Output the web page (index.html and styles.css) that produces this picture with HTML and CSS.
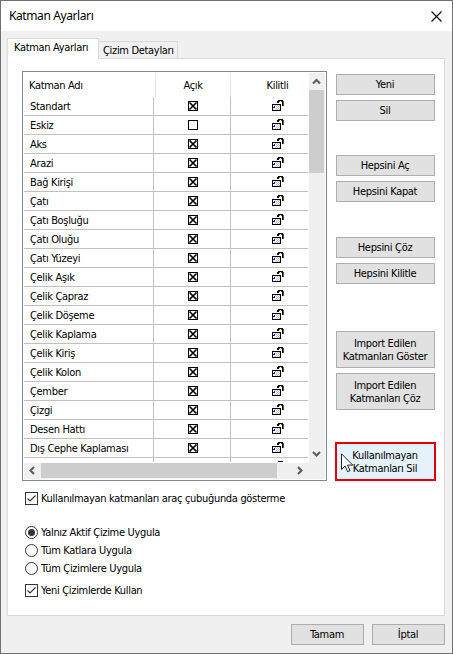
FILE: index.html
```html
<!DOCTYPE html>
<html lang="tr">
<head>
  <meta charset="UTF-8">
  <meta name="viewport" content="width=device-width, initial-scale=1.0">
  <title>Katman Ayarları</title>
  <link rel="stylesheet" href="styles.css">
</head>
<body>
  <div class="dialog">
    <header class="titlebar">
      <h1 class="title">Katman Ayarları</h1>
      <svg class="close" width="11" height="11" viewBox="0 0 11 11"><path d="M0.5 0.5L10.5 10.5M10.5 0.5L0.5 10.5" stroke="#000" stroke-width="1.1"/></svg>
    </header>

    <nav class="tabs">
      <div class="tab active">Katman Ayarları</div>
      <div class="tab">Çizim Detayları</div>
    </nav>

    <main class="pane">
      <section class="left">
        <div class="listbox">
          <div class="list-top">
            <div class="list">
              <div class="list-head">
                <div class="name">Katman Adı</div>
                <div class="open">Açık</div>
                <div class="locked">Kilitli</div>
              </div>
              <div id="rows"></div>
            </div>
            <div class="vscroll">
              <svg class="arrow" width="15" height="17" viewBox="0 0 15 17"><path d="M4 10.5L7.5 7L11 10.5" fill="none" stroke="#606060" stroke-width="2.2"/></svg>
              <div class="vthumb"></div>
              <svg class="arrow" width="15" height="17" viewBox="0 0 15 17"><path d="M4 6L7.5 9.5L11 6" fill="none" stroke="#606060" stroke-width="2.2"/></svg>
            </div>
          </div>
          <div class="hscroll">
            <svg class="arrow" width="17" height="15" viewBox="0 0 17 15"><path d="M10 4L6.5 7.5L10 11" fill="none" stroke="#606060" stroke-width="2.2"/></svg>
            <div class="hthumb"></div>
            <svg class="arrow right" width="17" height="15" viewBox="0 0 17 15"><path d="M6 4L9.5 7.5L6 11" fill="none" stroke="#606060" stroke-width="2.2"/></svg>
          </div>
        </div>

        <div class="option hide-unused">
          <svg width="13" height="13" viewBox="0 0 13 13"><rect x="0.5" y="0.5" width="12" height="12" fill="#fff" stroke="#333"/><path d="M2.5 6.5L5 9L10.5 3.5" fill="none" stroke="#333" stroke-width="1.2"/></svg>
          <span>Kullanılmayan katmanları araç çubuğunda gösterme</span>
        </div>
        <div class="option radio first">
          <svg width="13" height="13" viewBox="0 0 13 13"><circle cx="6.5" cy="6.5" r="6" fill="#fff" stroke="#333"/><circle cx="6.5" cy="6.5" r="3.5" fill="#333"/></svg>
          <span>Yalnız Aktif Çizime Uygula</span>
        </div>
        <div class="option radio">
          <svg width="13" height="13" viewBox="0 0 13 13"><circle cx="6.5" cy="6.5" r="6" fill="#fff" stroke="#333"/></svg>
          <span>Tüm Katlara Uygula</span>
        </div>
        <div class="option radio">
          <svg width="13" height="13" viewBox="0 0 13 13"><circle cx="6.5" cy="6.5" r="6" fill="#fff" stroke="#333"/></svg>
          <span>Tüm Çizimlere Uygula</span>
        </div>
        <div class="option new-drawings">
          <svg width="13" height="13" viewBox="0 0 13 13"><rect x="0.5" y="0.5" width="12" height="12" fill="#fff" stroke="#333"/><path d="M2.5 6.5L5 9L10.5 3.5" fill="none" stroke="#333" stroke-width="1.2"/></svg>
          <span>Yeni Çizimlerde Kullan</span>
        </div>
      </section>

      <section class="actions">
        <div class="group">
          <button class="button">Yeni</button>
          <button class="button">Sil</button>
        </div>
        <div class="group">
          <button class="button">Hepsini Aç</button>
          <button class="button">Hepsini Kapat</button>
        </div>
        <div class="group second">
          <button class="button">Hepsini Çöz</button>
          <button class="button">Hepsini Kilitle</button>
        </div>
        <div class="group imports">
          <button class="button tall">Import Edilen<br>Katmanları Göster</button>
          <button class="button tall">Import Edilen<br>Katmanları Çöz</button>
        </div>
        <button class="button tall hovered">
          Kullanılmayan<br>Katmanları Sil
          <svg class="cursor" width="13" height="20" viewBox="0 0 13 20"><path d="M0.5 0.8V16.5L4.1 13L6.6 18.7L9 17.6L6.5 12.1H11.8Z" fill="#fff" stroke="#223" stroke-width="1"/></svg>
        </button>
      </section>
    </main>

    <footer class="footer">
      <button class="button small">Tamam</button>
      <button class="button small">İptal</button>
    </footer>
  </div>

  <script src="script.js"></script>
</body>
</html>
```

FILE: styles.css
```css
* {
  box-sizing: border-box;
}

body {
  margin: 0;
  font-family: "DejaVu Sans Condensed", "Noto Sans", sans-serif;
  font-size: 11px;
  letter-spacing: -0.32px;
  color: #000;
}

svg {
  display: block;
  flex: none;
}

.dialog {
  width: 453px;
  height: 654px;
  border: 1px solid #707070;
  background-color: #f0f0f0;
  overflow: hidden;
}

.titlebar {
  height: 30px;
  padding: 0 10px 0 8px;
  background-color: #fff;
  display: flex;
  align-items: center;
  justify-content: space-between;
}

.title {
  margin: 0;
  font-family: "Noto Sans", sans-serif;
  font-size: 12px;
  font-weight: normal;
  letter-spacing: -0.4px;
  line-height: 16px;
}

.tabs {
  height: 27px;
  padding-left: 6px;
  display: flex;
  align-items: flex-end;
  white-space: nowrap;
}

.tab {
  width: 79px;
  height: 17px;
  border: 1px solid #d9d9d9;
  border-width: 1px 1px 0 0;
  padding-left: 4px;
  line-height: 18px;
}

.tab.active {
  position: relative;
  width: 92px;
  height: 21px;
  margin-bottom: -1px;
  border-left-width: 1px;
  padding-left: 6px;
  background-color: #fff;
}

.pane {
  width: 438px;
  height: 558px;
  margin-left: 6px;
  border: 1px solid #d9d9d9;
  padding: 12px 8px 0 14px;
  background-color: #fff;
  display: flex;
  justify-content: space-between;
}

.left {
  width: 305px;
}

.listbox {
  height: 410px;
  border: 1px solid #828790;
  padding: 1px;
}

.list-top {
  height: 390px;
  display: flex;
}

.list {
  width: 285px;
  height: 389px;
  overflow: hidden;
}

.list-head {
  height: 24px;
  line-height: 25px;
  display: flex;
}

.list-head .name {
  width: 132px;
  border-right: 1px solid #e5e5e5;
  padding-left: 5px;
}

.list-head .open {
  width: 75px;
  border-right: 1px solid #e5e5e5;
  text-align: center;
}

.list-head .locked {
  width: 78px;
  padding-left: 15px;
  text-align: center;
}

.row {
  width: 284px;
  height: 19px;
  border-bottom: 1px solid #c0c0c0;
  display: flex;
}

.row .name {
  width: 130px;
  border-right: 1px solid #c0c0c0;
  padding-left: 6px;
  line-height: 20px;
  white-space: nowrap;
}

.row .open {
  width: 77px;
  border-right: 1px solid #c0c0c0;
  padding: 4px 0 0 34px;
}

.row .locked {
  width: 77px;
  padding: 3px 0 0 41px;
}

.vscroll {
  width: 16px;
  height: 390px;
  background-color: #f0f0f0;
  display: flex;
  flex-direction: column;
}

.vthumb {
  width: 15px;
  height: 83px;
  margin-bottom: 273px;
  background-color: #cdcdcd;
}

.hscroll {
  height: 16px;
  background-color: #f0f0f0;
  display: flex;
}

.hthumb {
  width: 236px;
  height: 15px;
  background-color: #cdcdcd;
}

.arrow.right {
  margin-left: 15px;
}

.option {
  height: 13px;
  margin-left: 3px;
  display: flex;
  align-items: center;
  gap: 3px;
  line-height: 15px;
  white-space: nowrap;
}

.hide-unused {
  margin-top: 11px;
}

.radio {
  margin-top: 5px;
}

.radio.first {
  margin-top: 21px;
}

.new-drawings {
  margin-top: 9px;
}

.actions {
  width: 101px;
  padding-top: 3px;
  display: flex;
  flex-direction: column;
  align-items: center;
}

.group {
  height: 81px;
  display: flex;
  flex-direction: column;
  gap: 5px;
}

.group.second {
  margin-top: 1px;
  height: 94px;
}

.group.imports {
  height: 111px;
}

.button {
  width: 99px;
  height: 21px;
  border: 1px solid #adadad;
  padding: 0 1px 0 0;
  background-color: #e1e1e1;
  color: #000;
  font-family: inherit;
  font-size: 11px;
  letter-spacing: inherit;
  line-height: 13px;
  text-align: center;
  white-space: nowrap;
}

.button.tall {
  height: 37px;
}

.button.hovered {
  position: relative;
  width: 101px;
  height: 39px;
  border: 2px solid #e0000b;
  background-color: #e5f1fb;
}

.cursor {
  position: absolute;
  left: 4px;
  top: 9px;
}

.footer {
  padding: 8px 7px 0 0;
  display: flex;
  justify-content: flex-end;
  gap: 8px;
}

.button.small {
  width: 73px;
}
```

FILE: script.js
```js
const layers = [
  'Standart', 'Eskiz', 'Aks', 'Arazi', 'Bağ Kirişi', 'Çatı', 'Çatı Boşluğu',
  'Çatı Oluğu', 'Çatı Yüzeyi', 'Çelik Aşık', 'Çelik Çapraz', 'Çelik Döşeme',
  'Çelik Kaplama', 'Çelik Kiriş', 'Çelik Kolon', 'Çember', 'Çizgi',
  'Desen Hattı', 'Dış Cephe Kaplaması', ''
];

const lock = `<svg width="13" height="12" viewBox="0 0 13 12" shape-rendering="crispEdges">
  <path d="M0 4h9v7H0z" fill="#000"/><path d="M1 5h7v5H1z" fill="#fff"/>
  <path d="M3 5h1v1H3zM5 5h1v1H5zM7 5h1v1H7zM4 6h1v1H4zM6 6h1v1H6zM5 7h1v1H5zM7 7h1v1H7zM4 8h1v1H4zM6 8h1v1H6zM3 9h1v1H3zM5 9h1v1H5zM7 9h1v1H7z" fill="#c0c0c0"/>
  <path d="M2 6h1v1H2zM1 7h2v1H1z" fill="#00f"/>
  <path d="M5 1h2v2H5zM6 0h5v1H6zM10 1h1v5H10z" fill="#000"/>
  <path d="M7 1h1v1H7zM9 1h1v1H9zM11 1h1v5H11z" fill="#55553c"/>
</svg>`;

function box(checked) {
  return `<svg width="10" height="10" viewBox="0 0 10 10">
    <rect x="0.5" y="0.5" width="9" height="9" fill="#fff" stroke="#000"/>
    ${checked ? '<path d="M1.5 1.5L8.5 8.5M8.5 1.5L1.5 8.5" stroke="#000" stroke-width="1.7"/>' : ''}
  </svg>`;
}

document.getElementById('rows').innerHTML = layers.map(name => `
  <div class="row">
    <div class="name">${name}</div>
    <div class="open">${name ? box(name !== 'Eskiz') : ''}</div>
    <div class="locked">${lock}</div>
  </div>`).join('');
```
